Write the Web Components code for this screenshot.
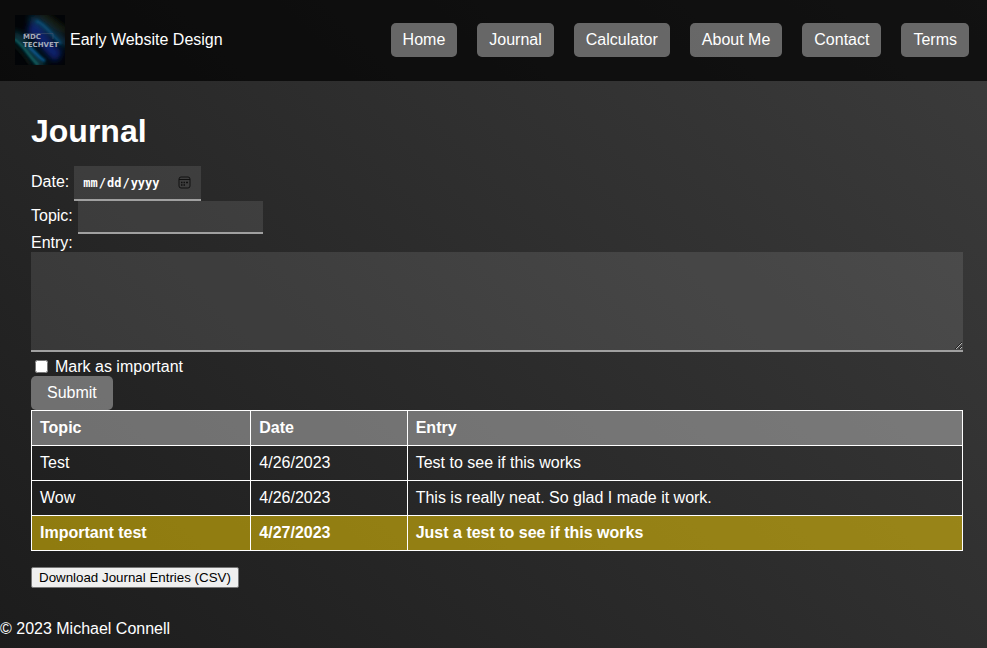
<!DOCTYPE html>
<html lang="en">
<head>
<meta charset="utf-8">
<meta name="viewport" content="width=device-width, initial-scale=1">
<title>Journal</title>
<style>
  html { min-height: 100%; background: #1d1d1d; }
  body {
    margin: 0;
    min-height: 100vh;
    font: 16px/18px "Liberation Sans", Arial, sans-serif;
    color: #fff;
    background: linear-gradient(45deg, #1c1c1c, #3c3c3c);
    --button: rgba(180, 180, 180, .54);
    --field: rgba(255, 255, 255, .1);
    --field-line: #a0a0a0;
  }
</style>
</head>
<body>
<journal-app></journal-app>

<script>
class BaseElement extends HTMLElement {
  render(html) {
    this.attachShadow({ mode: 'open' }).innerHTML = html;
  }
}

customElements.define('site-logo', class extends BaseElement {
  connectedCallback() {
    this.render(`
      <style>
        :host { display: block; width: 50px; height: 50px; }
        svg { display: block; }
        text { font: bold 7px "DejaVu Sans", sans-serif; fill: #a4abb8; }
      </style>
      <svg width="50" height="50" viewBox="0 0 50 50" role="img" aria-label="MDC Techvet">
        <defs>
          <filter id="soft" x="-30%" y="-30%" width="160%" height="160%"><feGaussianBlur stdDeviation="3"/></filter>
          <filter id="fine" x="-30%" y="-30%" width="160%" height="160%"><feGaussianBlur stdDeviation="1"/></filter>
          <clipPath id="frame"><rect width="50" height="50"/></clipPath>
        </defs>
        <rect width="50" height="50" fill="#020407"/>
        <g clip-path="url(#frame)" fill="none">
          <g filter="url(#soft)">
            <path d="M15 3C27 6 35 17 52 30" stroke="#07384f" stroke-width="7"/>
            <path d="M14 12C26 17 30 32 44 42" stroke="#0a2270" stroke-width="12"/>
            <path d="M-2 20C9 23 15 39 28 52" stroke="#093c48" stroke-width="8"/>
            <path d="M24 -2C34 2 41 12 52 17" stroke="#26331a" stroke-width="4"/>
          </g>
          <g filter="url(#fine)" opacity=".75">
            <path d="M21 6C28 8 35 17 46 29" stroke="#07527e" stroke-width="3"/>
            <path d="M-1 24C8 29 12 39 23 50" stroke="#16817d" stroke-width="2"/>
            <path d="M14 32C19 36 24 43 30 46" stroke="#0763a5" stroke-width="3"/>
            <path d="M-1 31C5 36 11 43 15 50" stroke="#2b351d" stroke-width="1"/>
          </g>
        </g>
        <path d="M9 18.5H38V24" fill="none" stroke="#41506b" stroke-width=".6"/>
        <text x="8" y="24">MDC</text>
        <text x="8" y="32">TECHVET</text>
      </svg>`);
  }
});

customElements.define('nav-link', class extends BaseElement {
  connectedCallback() {
    this.render(`
      <style>
        :host { display: block; }
        a { display: block; padding: 8px 12px; border-radius: 5px; color: inherit; text-decoration: none; background: var(--button); white-space: nowrap; }
      </style>
      <a href="${this.getAttribute('to')}"><slot></slot></a>`);
  }
});

customElements.define('site-header', class extends BaseElement {
  connectedCallback() {
    this.render(`
      <style>
        :host { display: block; }
        header { display: flex; align-items: center; justify-content: space-between; flex-wrap: wrap; gap: 20px; padding: 15px 18px 16px 15px; background: rgba(0, 0, 0, .7); }
        .brand { display: flex; align-items: center; gap: 5px; }
        nav { display: flex; flex-wrap: wrap; gap: 20px; }
      </style>
      <header>
        <div class="brand"><site-logo></site-logo><span><slot></slot></span></div>
        <nav aria-label="Main"><slot name="links"></slot></nav>
      </header>`);
  }
});

customElements.define('journal-form', class extends BaseElement {
  connectedCallback() {
    this.render(`
      <style>
        :host { display: block; }
        form { display: block; }
        .row { display: flex; align-items: baseline; gap: 5px; }
        input, textarea { margin: 0; color: inherit; border-radius: 0; }
        .field { box-sizing: border-box; padding: 8px; border: 0; border-bottom: 2px solid var(--field-line); background: var(--field); outline: 0; }
        #date { width: 127px; height: 35px; font: bold 12px "DejaVu Sans Mono", monospace; }
        #date::-webkit-calendar-picker-indicator {
          width: 13px; height: 13px; padding: 2px;
          background: url("data:image/svg+xml,%3Csvg xmlns='http://www.w3.org/2000/svg' viewBox='0 0 13 13'%3E%3Crect x='1' y='1' width='11' height='11' rx='2' fill='none' stroke='%23111'/%3E%3Cpath d='M1 3.5h11' stroke='%23111'/%3E%3Cpath d='M3 6.5h1.5m1 0h1.5m1 0h2M3 9h1.5m1 0h1.5' stroke='%23111' stroke-width='1.3'/%3E%3C/svg%3E") center / 13px 13px no-repeat;
        }
        #topic { width: 185px; height: 33px; font-family: "Liberation Sans", Arial, sans-serif; }
        .stack { display: block; }
        textarea { display: block; width: 100%; height: 100px; resize: vertical; font-family: "Liberation Mono", monospace; }
        .check { display: flex; align-items: flex-start; gap: 7px; padding: 6px 0 0 4px; }
        .check input { width: 13px; height: 13px; margin-top: 2px; }
        button { display: block; padding: 8px 16px; border: 0; border-radius: 5px; color: inherit; font: inherit; background: var(--button); }
      </style>
      <form>
        <div class="row"><label for="date">Date:</label><input class="field" id="date" type="date"></div>
        <div class="row"><label for="topic">Topic:</label><input class="field" id="topic" type="text"></div>
        <label class="stack" for="entry">Entry:</label>
        <textarea class="field" id="entry"></textarea>
        <div class="check"><input id="important" type="checkbox"><label for="important">Mark as important</label></div>
        <button type="button">Submit</button>
      </form>`);
  }
});

customElements.define('journal-table', class extends BaseElement {
  connectedCallback() {
    const entries = [
      ['Test', '4/26/2023', 'Test to see if this works'],
      ['Wow', '4/26/2023', 'This is really neat. So glad I made it work.'],
      ['Important test', '4/27/2023', 'Just a test to see if this works', true]
    ];
    const rows = entries.map(([topic, date, text, important]) =>
      `<tr${important ? ' class="important"' : ''}><td>${topic}</td><td>${date}</td><td>${text}</td></tr>`).join('');
    this.render(`
      <style>
        :host { display: block; }
        table { width: 100%; border-collapse: collapse; }
        th, td { padding: 8px; border: 1px solid #fff; text-align: left; }
        thead tr { background: var(--button); }
        .important { background: rgba(255, 215, 0, .5); font-weight: bold; }
      </style>
      <table>
        <thead><tr><th scope="col">Topic</th><th scope="col">Date</th><th scope="col">Entry</th></tr></thead>
        <tbody>${rows}</tbody>
      </table>`);
  }
});

customElements.define('download-button', class extends BaseElement {
  connectedCallback() {
    this.render(`
      <style>
        :host { display: block; }
        button { display: block; padding: 2px 7px; border: 1px solid #767676; border-radius: 2px; color: #000; background: #efefef; font-family: "Liberation Sans", Arial, sans-serif; line-height: 15px; }
      </style>
      <button type="button"><slot></slot></button>`);
  }
});

customElements.define('journal-app', class extends BaseElement {
  connectedCallback() {
    this.render(`
      <style>
        :host { display: block; }
        main { padding: 31px 24px 32px 31px; }
        h1 { margin: 0 0 16px; font-size: 32px; line-height: 38px; }
        download-button { margin-top: 16px; }
        footer { padding-bottom: 10px; }
      </style>
      <site-header>
        Early Website Design
        <nav-link slot="links" to="#home">Home</nav-link>
        <nav-link slot="links" to="#journal">Journal</nav-link>
        <nav-link slot="links" to="#calculator">Calculator</nav-link>
        <nav-link slot="links" to="#about">About Me</nav-link>
        <nav-link slot="links" to="#contact">Contact</nav-link>
        <nav-link slot="links" to="#terms">Terms</nav-link>
      </site-header>
      <main>
        <h1>Journal</h1>
        <journal-form></journal-form>
        <journal-table></journal-table>
        <download-button>Download Journal Entries (CSV)</download-button>
      </main>
      <footer>© 2023 Michael Connell</footer>`);
  }
});
</script>
</body>
</html>
